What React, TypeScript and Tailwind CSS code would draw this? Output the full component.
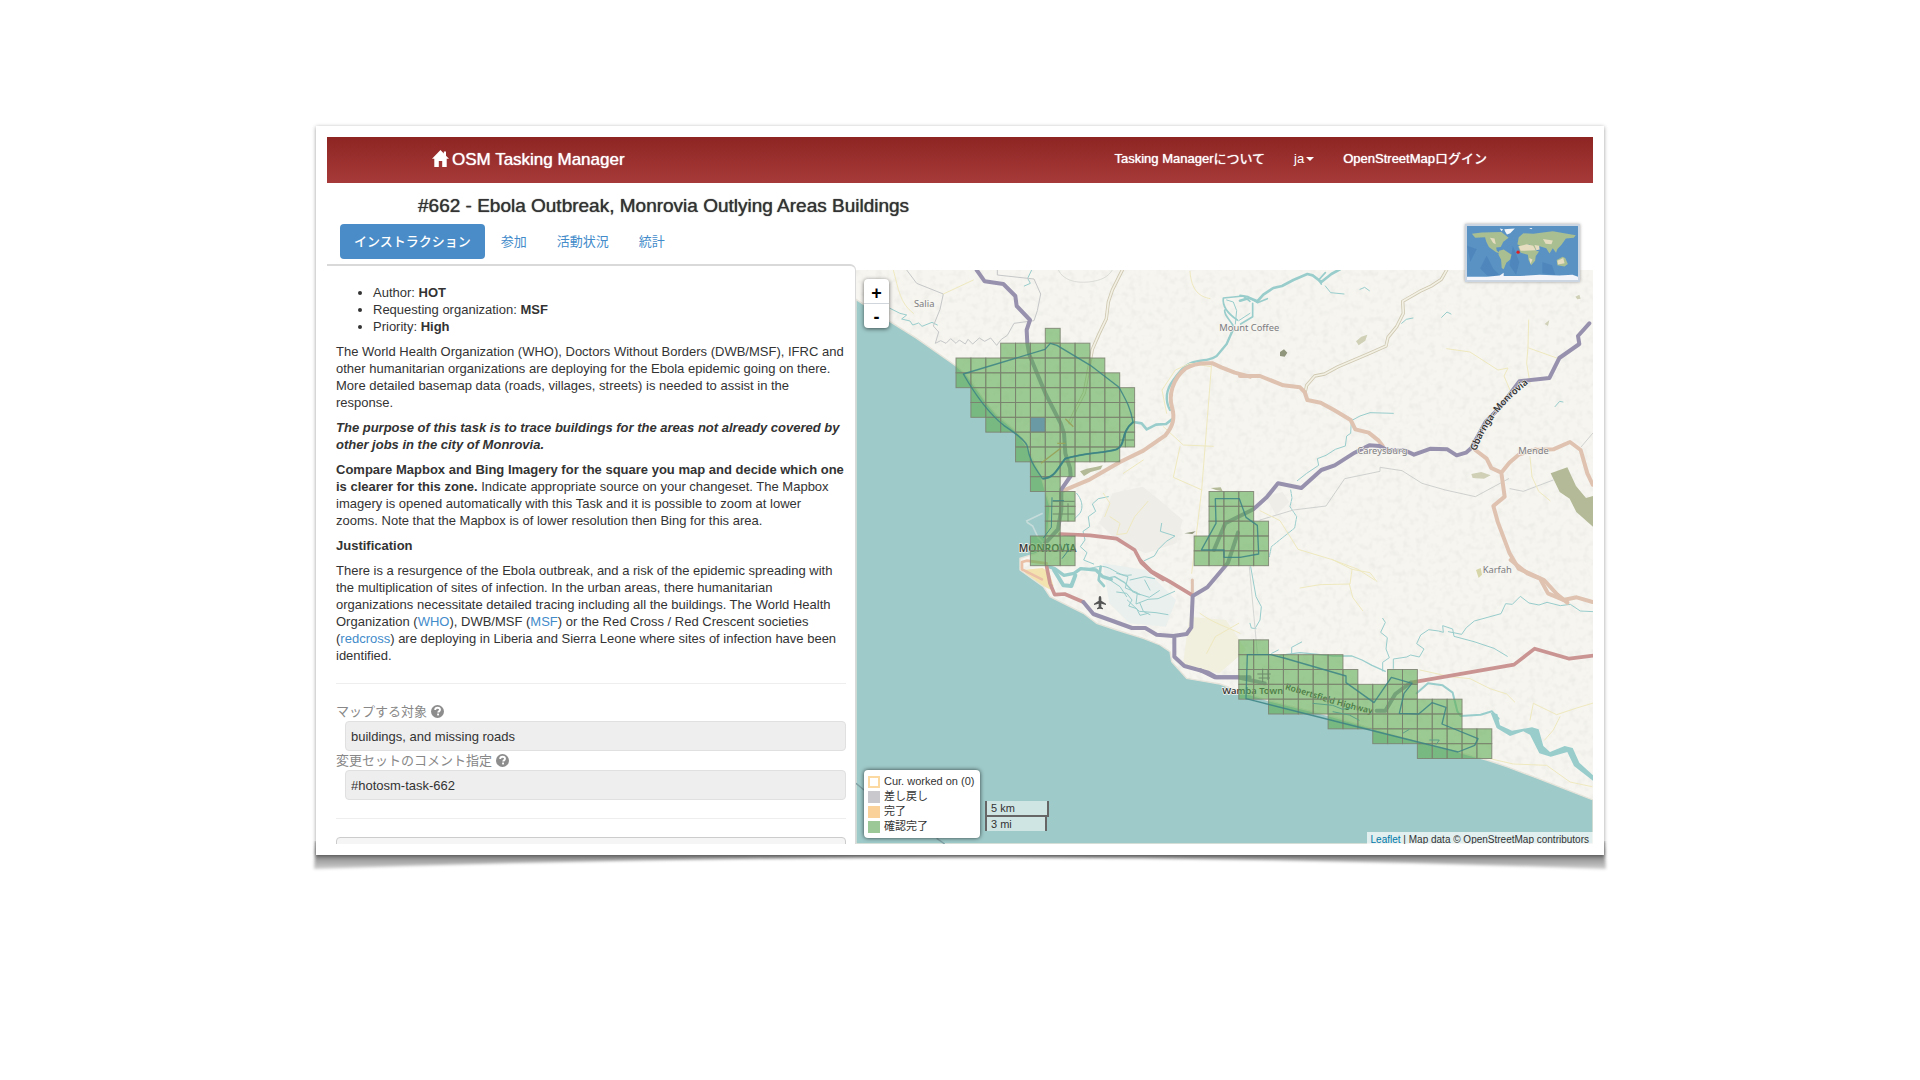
import React from 'react'

type Row = [row: number, from: number, to: number]

const CELL_W = 44.65
const CELL_H = 44.5
const GRID_X = 300
const GRID_Y = 175

const rows: Row[] = [
  [0, 6, 6],
  [1, 3, 8],
  [2, 0, 9],
  [3, 0, 10],
  [4, 1, 11],
  [5, 1, 11],
  [6, 2, 11],
  [7, 4, 11],
  [8, 4, 10],
  [9, 5, 7],
  [10, 5, 6],
  [11, 6, 7],
  [12, 6, 7],
  [13, 6, 6],
  [14, 5, 7],
  [15, 5, 7],
  [11, 17, 19],
  [12, 17, 19],
  [13, 17, 20],
  [14, 16, 20],
  [15, 16, 20],
  [21, 19, 20],
  [22, 19, 25],
  [23, 19, 26],
  [23, 29, 30],
  [24, 19, 30],
  [25, 21, 33],
  [26, 25, 33],
  [27, 28, 35],
  [28, 31, 35],
]

const cells = rows.flatMap(([row, from, to]) =>
  Array.from({ length: to - from + 1 }, (_, i) => ({ row, col: from + i }))
)

const tabs = ['インストラクション', '参加', '活動状況', '統計']

const legend = [
  { label: 'Cur. worked on (0)', swatch: 'border-2 border-[#fbd9a0] bg-white' },
  { label: '差し戻し', swatch: 'bg-[#c9c8cc]' },
  { label: '完了', swatch: 'bg-[#fbd19a]' },
  { label: '確認完了', swatch: 'bg-[#9cc796]' },
]

function HomeIcon() {
  return (
    <svg viewBox="0 0 17 17" className="w-[17px] h-[17px] mb-[3px]" fill="currentColor" aria-hidden="true">
      <path d="M8.5 0 0 8.8h2.3V17h4.5v-6h3.4v6h4.5V8.8H17l-3-3.1V1.4h-2.2v2z" />
    </svg>
  )
}

function HelpIcon() {
  return (
    <svg viewBox="0 0 14 14" className="w-[13px] h-[13px]" aria-hidden="true">
      <circle cx="7" cy="7" r="7" fill="#8d8d8d" />
      <path d="M4.5 5.5C4.5 3.8 5.6 3 7.1 3s2.6.9 2.6 2.2c0 1.7-2 1.6-2 3" fill="none" stroke="#fff" strokeWidth="2" />
      <rect x="6.6" y="9.2" width="2" height="2" fill="#fff" />
    </svg>
  )
}

function Rivers() {
  return (
    <g fill="none" stroke="#98cdcc" strokeWidth="3" strokeLinejoin="round" strokeLinecap="round">
      <g transform="translate(-18 -30)">
        <path d="M120 145l30 15 20 5-15 12 25 6 8 12 18-6 10 10 30-12 16 8" />
        <path d="M545 30l-12 25 8 15-18 8" />
        <path d="M850 486l25 4 15 18 28-14 30-2 18-14" strokeWidth="8" />
        <path d="M960 450c-16-30-12-60 10-90s40-52 70-56 45-6 60-16l30-36 22-50" strokeWidth="7" />
        <path d="M1152 202c-10-22-30-34-28-52M1162 180c-24-16-46-36-42-66l60-6 20 16" strokeWidth="5" />
        <path d="M1130 120l20 6 10 26-4 40M1200 160l-34 22" />
        <path d="M680 700c14 16 22 40 10 60l-16 16" />
        <path d="M775 710l-30 6-18 16 10 22-22 16 4 30-20 14 6 26-14 20 20 18-10 22 30 12" />
        <path d="M935 790l-4 24 44 14-26 16-24 24-12 20-30 14" />
        <path d="M690 925c30 8 50-12 78-4s40 30 76 24" />
      </g>
      <g transform="translate(1152 -30)">
        <path d="M0 122l28-8 24 10 18-20 30-20 26-6 34-18 42-18 16 4 26 20 30-24 26-14" strokeWidth="8" />
        <path d="M0 106l24 4 28 18 30-12M38 130v40l-36 22M244 72l-8-12 20-22" strokeWidth="5" />
        <path d="M256 78l16 20 40 4M360 88l14-6 14 10" />
        <path d="M605 172l16-16 12 6M485 190l14-12 20-4M945 440l14-16 10 2" />
        <path d="M460 460l-70-2-30 10-26 14-2 38-12 8-4 30-30 10-28 18-26 10 4 20-36 24-28 22" />
        <path d="M152 690l4 24-6 26 20 30-6 34-30 24-40 32-6 30" strokeDasharray="9 3" />
      </g>
      <g transform="translate(-18 870)">
        <path d="M590 18l24 8 28 20 30-6 20-14 46 4 20 20 26 8" strokeWidth="10" />
        <path d="M612 30l28 46 24 2 12-32" strokeWidth="12" />
        <path d="M752 20l-6 40 16 18" strokeWidth="8" />
        <path d="M764 56l30-6 30 18 26 28 20 8" strokeWidth="4" />
        <path d="M800 40l34 10-8 34 36 14-4 34 36-14 30-2 50-22M860 100l38 12 30-20M832 120l36 34 50 4 36 6M870 130l10 24 20 10M780 60l30 20 20 30" />
        <path d="M840 60l44-10 30 6M900 90l-16-30M800 96l30 4 16 20-10 18 24 8 10 20 24-6" />
      </g>
      <g transform="translate(1032 870)">
        <path d="M152 20l16 90 16 30-4 40-14 24M150 190l4 14 14 2" />
        <path d="M240 286l60-8 100 10h56l30 12 30 16 40 18" strokeWidth="4" />
        <path d="M548 175l8 12-14 30 20 16-4 34 10 26-20 14v26" />
        <path d="M580 325v-28l40-6 12-6 26 6 14-24-22-16 12-26 24-16 30 4 14 4-2-20 30 10 4 22 60 16 60 20 40 24" />
        <path d="M745 215l40 8 14-20 24-20 80-22 14-30 20 2 24-24 26 20 30 6 24-8 40 10 30-4 30 20 38 2" />
        <path d="M650 400l34-30 44 6 30 22 14 56 10 14 60-4 34-10 20 22" strokeWidth="6" />
        <path d="M275 280v-18l30-16M215 280l20-10" />
      </g>
    </g>
  )
}

function Roads() {
  return (
    <g fill="none" strokeLinejoin="round" strokeLinecap="round">
      <g stroke="#c9ccc9" strokeWidth="3">
        <g transform="translate(-18 -30)">
          <path d="M170 30l30 40 80 32-10 46-20 50 16 18-10 34 16-8 16 8 14-14 16 14 10-10 18 12 8-14 14 14 20-18 16 10 18-10 18 22 14-18 18-12 20-36 60-8 10-30 10-50-20-45-110-12v-25" stroke="#c5c7c8" />
          <path d="M625 30c14 30 50 40 90 36s60-16 72-36" stroke="#dcdcd8" />
        </g>
        <g transform="translate(1152 -30)" stroke="#cfd1cf">
          <path d="M60 780l100-30 98-12 56-82 106-22v-12l66 10 60 38 70 20 90 20 100-54M810 686l40 8 90-34M1024 560l34-40" />
        </g>
        <path d="M1180 890l24 260" stroke="#d5d7d4" />
      </g>
      <g stroke="#efe9bf" strokeWidth="3">
        <g transform="translate(-18 -30)">
          <path d="M130 30c16 60 20 100 60 130M280 102l90-42M1020 34c4 60 30 76 60 82M1085 310l-30 380-30 250M940 500l60 55 90 4M990 560l-20 92 86 38M1082 320l-62-10-44 20-40 60 14 70" />
          <path d="M780 770l30 20-10 34 30-4 24-50 40-46M760 700l20 30-16 40M820 640l60-40" />
        </g>
        <g transform="translate(1152 -30)">
          <path d="M620 266l70 10 84 54 30-6-12 24 18 42M866 180l-2 80-4 50 10 60M866 264l90 32M60 752l60 30 54 86 100 30 80 30 50 32M870 590l6 60 20 44 34 28" />
        </g>
        <g transform="translate(1032 870)">
          <path d="M300 84l60-10 90-2 6-44-60-30M456 28l54 10 20 26M448 72l10 40 30 40M0 160c40 30 80 40 120 60M20 280l26-50 70-40M660 330l90 20 60 6 60 30 50 16 24 24M990 480l10-50 70 34 60-20 60-18M1080 470l-20 40-26 30M870 596l70 16 100 4 70 50 66 14" />
        </g>
      </g>
      <g strokeWidth="10" stroke="#cfc9b2">
        <path d="M817 30l-30 60-12 36-6 50-22 46-20 46-24 130-26 50-18 40" transform="translate(-18 -30)" />
        <path d="M620 30l-16 28-30 20-34 16-52 30 2 36-20 40-26 32-6 26-54 24-90 38-40 22-30 6-24 28-4 18" transform="translate(1152 -30)" />
      </g>
      <g strokeWidth="5" stroke="#f3f0e4">
        <path d="M817 30l-30 60-12 36-6 50-22 46-20 46-24 130-26 50-18 40" transform="translate(-18 -30)" />
        <path d="M620 30l-16 28-30 20-34 16-52 30 2 36-20 40-26 32-6 26-54 24-90 38-40 22-30 6-24 28-4 18" transform="translate(1152 -30)" />
      </g>
      <g stroke="#dfc2b0" strokeWidth="12">
        <path d="M640 692l80-34 90-52 70-34 66-46c22-26 30-50 20-84s0-84 40-116c24-16 52-18 82-16l26 12 40 16 46 12" transform="translate(-18 -30)" />
        <g transform="translate(1152 -30)">
          <path d="M0 348l60 0 70 28 50 6 14 14 8 24 40 8 40 22 50 30 14 28 40 10 30 24 12 16M706 570l34 26 14 28 30 14 24-30 28-24 50-16M784 638l10 72-34 28 14 50 34 90 28 48 76 34 40 44 30 24" />
          <path d="M880 570l60-2 50-22 32 24 20 70 16 34" />
        </g>
        <path d="M932 0l50 40 38 16 24 44 46 20 40-8 48 14" transform="translate(1032 870)" />
        <path d="M1027 60v40" transform="translate(-18 870)" strokeWidth="9" />
        <path d="M590 10l-60-8-14 4 0 22 60 30" transform="translate(-18 870)" strokeWidth="8" stroke="#eac0a6" />
      </g>
      <g stroke="#c99492" strokeWidth="11">
        <path d="M630 822l90 4 80 10 54 34 20 38 30 28 36 22" transform="translate(-18 -30)" />
        <path d="M870 0l34 34 54 30 66 40M590 20l10 50 14 34 30-2 56 24" transform="translate(-18 870)" />
        <path d="M632 368l310-54 62-48 104 30 72-9" transform="translate(1032 870)" />
      </g>
      <g stroke="#9791ae" strokeWidth="12">
        <path d="M380 30l24 34 56 8 36 36 4 30 40 42-10 30 2 40 6 34 50 120 44 86 10 30 4 60 14 44 2 24-28 40 0 60-10 60-50 54" transform="translate(-18 -30)" />
        <path d="M700 126l30 36 50 18 66 24h40l34 20 50 4 40-6 14-20 4-94 44-26 62-74 30-90M973 228v62l30 28 72 20 24 14h100" transform="translate(-18 870)" />
        <path d="M-78 870l34-80 84-42 40-36 34-42 70 14 60-54 40-14 60-38 44-22 30 2 24 12h50l30 14 50-18 50 2 28 18 28-8 16-14 44-80 40-40 60-80 90-10 30-60 60-42-4-24 34-38" transform="translate(1152 -30)" />
        <path d="M0 330l44 22h70l80 18M530 452h26l30-50 46-34" transform="translate(1032 870)" />
      </g>
    </g>
  )
}

function Landscape() {
  return (
    <g>
      <g fill="#eeede8">
        <path d="M770 670l90-20 50 40 70 60-20 70-90 30-80-30-60-60z" />
        <path d="M1000 1040l110 10 60 90-80 70-110-20z" fill="#f1efde" />
        <path d="M740 880l130 20 90 90-30 80-110-10-60-60z" fill="#eaf0ed" />
        <path d="M1230 680l50-14 20 30-40 40z" />
      </g>
      <g fill="#b4ba97">
        <path d="M2084 610l50-18 26 56 30 36 21-6v92l-50-44-20-40-30-20z" />
        <path d="M672 604l20-8 30-6 18-4-6 12-30 8-20 12zM1064 654l30-2 6 12-20-4z" />
        <path d="M1272 246l12-8 10 10-8 12-14-2zM985 790l34-6-10 8z" fill="#8f967b" />
        <path d="M1500 214l16-14 18-6-6 18-20 14zM1846 612l30-6 28 10-20 10-34-2zM2066 162l14-12-4 18zM2158 80l12-6 4 12-10 2z" fill="#cfd0b6" />
        <path d="M1860 900l14-6 4 20-10 10z" fill="#d7d6a9" />
      </g>
      <path d="M500 900l60-6 20 14 12 38-6 14-60-30z" fill="#f3e3ae" />
    </g>
  )
}

function Boundaries() {
  return (
    <g fill="none" stroke="#3b8385" strokeOpacity="0.85" strokeWidth="4" strokeLinejoin="round">
      <path d="M340 342l245-74 16-18 20 6 100 60 86 66c22 40 34 60 42 104-40 32-20 68-50 82-40 12-100 10-154 28-20 24-30 58-68 60-18-30-36-44-46-100-10-20-40-40-70-60-50-40-90-100-121-154z" transform="translate(-18 -30)" />
      <path d="M850 486c-40 32-20 68-50 82-40 12-100 10-154 28-20 24-30 58-68 60" strokeWidth="6" transform="translate(-18 -30)" />
      <path d="M608 722h34M606 712l-2 90-24 32M650 850l6 20-20 26" transform="translate(-18 -30)" strokeWidth="3" />
      <path d="M646 116h72l20 56 34 24 4 86-56 10h-48v-22h-68l44-80z" transform="translate(432 570)" />
      <path d="M82 104l70 0 40 10 186 54v20l84 60 52-76 62 18-24 30-14 60 58 2 40-34 42 14-12 50 108 44-10 20-50 20-240-60-396-100z" transform="translate(1092 1050)" />
    </g>
  )
}

function Hatching() {
  return (
    <g fill="none" stroke="#6d8a6a" strokeWidth="3">
      <path d="M808 488v44M790 510h44M612 666v88M636 700v54M590 694h66M590 732h66" />
      <path d="M1220 1196v40M1236 1200v30M1204 1212h40M1208 1224h34" />
      <path d="M1370 1300l60 6 30 12 30-6M1430 1325l50 10 30 16M1640 1390l20-12M1720 1410h30l-10 14" stroke="#5aa088" />
      <path d="M555 580l60-46M604 520l24 0M652 470l-24-24" stroke="#98a35c" strokeWidth="4" />
    </g>
  )
}

function MapCanvas() {
  return (
    <svg viewBox="0 0 2211 1722" preserveAspectRatio="xMinYMin slice" className="block w-full h-full" role="img" aria-label="Monrovia">
      <defs>
        <filter id="relief" x="0" y="0" width="100%" height="100%">
          <feTurbulence type="fractalNoise" baseFrequency="0.05" numOctaves="2" seed="4" />
          <feColorMatrix values="0 0 0 0 0.6  0 0 0 0 0.6  0 0 0 0 0.56  0.5 0 0 0 -0.23" />
        </filter>
      </defs>
      <rect width="2211" height="1722" fill="#f6f5f0" />
      <rect width="2211" height="1722" filter="url(#relief)" />
      <Landscape />
      <path
        d="M0 88L102 155 182 205 300 288 332 315 392 400 422 435 482 485 512 530 557 625 567 660 582 710 577 770 572 810 542 850 492 865 492 900 562 950 582 980 682 1030 722 1060 782 1080 862 1105 912 1125 942 1145 947 1175 992 1225 1032 1232 1092 1242 1147 1262 1237 1292 1412 1335 1547 1375 1682 1415 1812 1448 1892 1470 1952 1490 2032 1520 2122 1555 2211 1590V1722H0z"
        fill="#9ecac9"
        stroke="#e6e4da"
        strokeWidth="4"
      />
      <path d="M510 754l50-24M512 756l18 12 16 34 20 20" fill="none" stroke="#c5dcda" strokeWidth="5" />
      <path d="M0 1540l24 20M242 1705l24 17" stroke="#7f9fa3" strokeWidth="4" />
      <path
        d="M1904 1328l20 4 8 34 36 16 60-10 20 6 14 50 20 18 44-18 24 6 20 44 41 38v16l-57-44-20-42-50 14-34-10-28-56-20-10-40 14-40-24z"
        fill="#98cdcc"
      />
      <Rivers />
      <Roads />

      <g className="font-['Noto_Sans']" fontSize="28" fill="#7c7c80" stroke="#f6f5f0" strokeWidth="4" paintOrder="stroke">
        <text x="174" y="112">Salia</text>
        <text x="1090" y="184">Mount Coffee</text>
        <text x="1504" y="551">Careysburg</text>
        <text x="1987" y="551">Mende</text>
        <text x="1880" y="908">Karfah</text>
        <g fill="#3a3a3a" fontWeight="600">
          <text x="488" y="846" fontSize="31">MONROVIA</text>
          <text x="1099" y="1271">Wamba Town</text>
        </g>
      </g>
      <g className="font-['Noto_Sans']" fill="#333" fontWeight="600">
        <path id="highway" d="M1286 1258C1370 1280 1440 1310 1560 1334" fill="none" />
        <text fontSize="26"><textPath href="#highway">Robertsfield Highway</textPath></text>
        <path id="gbarnga" d="M1860 544C1888 470 1930 406 2030 330" fill="none" />
        <text fontSize="28" stroke="#f6f5f0" strokeWidth="3" paintOrder="stroke"><textPath href="#gbarnga">Gbarnga–Monrovia</textPath></text>
      </g>
      <path d="M732 978c3 0 4 4 4 8v6l14 9v4l-14-4v10l5 4v3l-9-2-9 2v-3l5-4v-10l-14 4v-4l14-9v-6c0-4 1-8 4-8z" fill="#555" />

      <g stroke="#7b8070" strokeWidth="3" fill="#5fad53" fillOpacity="0.6" strokeOpacity="0.85">
        {cells.map(({ row, col }) => (
          <rect
            key={`${row}-${col}`}
            x={GRID_X + col * CELL_W}
            y={GRID_Y + row * CELL_H}
            width={CELL_W}
            height={CELL_H}
            className={row === 6 && col === 5 ? 'fill-[#6a9aa3] [fill-opacity:1]' : undefined}
          />
        ))}
      </g>
      <Hatching />
      <Boundaries />
    </svg>
  )
}

function WorldMap() {
  return (
    <svg viewBox="0 0 339 165" preserveAspectRatio="none" className="block w-full h-full" role="img" aria-label="World">
      <rect width="339" height="165" fill="#5a92c4" />
      <path d="M60 90l20 40 20 20-30 10-30-30zM140 60l20 50-10 40-20-30zM230 110l30 10 10 30-40-6zM0 60l30 10-20 40z" fill="#4781b8" opacity="0.6" />
      <g fill="#a9bf92">
        <path d="M15 24l30-4 60-2 22 18-16 12-8 16-14 2 2 10 12 8-14-4-22-16-8-16-4-14-30 2z" />
        <path d="M98 76l14-4 24 16-4 14-12 10-8 20-6-4-2-26-8-14z" />
        <path d="M154 56l4-22 14-12 30 2 60-8 70 12-6 8-24 2-14 20-12 12-4 12-10-14-10 16-10-16-20-6-12 8-20-14-12 4-14 2z" />
        <path d="M156 62l26-6 20 2 10 18 8 2-10 14-2 14-12 14-8-16-2-16-22-6z" />
        <path d="M274 104l18-10 8 4 8 18-10 8-22-4z" />
      </g>
      <g fill="#e6dcc0">
        <path d="M158 62l24-6 20 4 8 14-46 2zM206 58l14 2 2 12-10 2zM276 106l18-8 4 16-20 4zM70 36l14 2 4 18-8-4zM232 40l30 4-4 12-18-2zM190 98l10 4-6 14z" />
      </g>
      <path d="M114 10l32-2-14 14-10 4-6-10zM100 8l10 2-4 6zM190 6l10 0-4 4z" fill="#f3f6f8" />
      <path d="M0 155l60 0 40-4 12-8 0 10 50 0 60-4 60 2 40-2 17 6v10H0z" fill="#f3f5fa" />
      <circle cx="156" cy="80" r="5" fill="#e02020" />
    </svg>
  )
}

function TaskMap() {
  return (
    <section className="relative flex-1 min-w-0 mt-[6px]">
      <div className="h-full overflow-hidden">
        <MapCanvas />
      </div>

      <div className="absolute left-2 top-[9px] w-[25px] flex flex-col rounded bg-white text-black text-lg font-bold leading-none shadow-[0_1px_4px_rgba(0,0,0,0.6)]">
        <button aria-label="Zoom in" className="h-[25px] pt-[3px] border-b border-gray-300">+</button>
        <button aria-label="Zoom out" className="h-6 pt-[2px]">-</button>
      </div>

      <div className="absolute right-[13px] top-[-46px] w-[115px] h-[58px] border-2 border-[#ccd6e2] shadow-[0_0_3px_rgba(0,0,0,0.35)]">
        <WorldMap />
      </div>

      <div className="absolute left-2 bottom-[6px] flex items-end gap-[5px]">
        <ul className="w-[116px] rounded bg-white px-1 py-1 text-[11px] text-[#333] shadow-[0_0_4px_rgba(0,0,0,0.7)]">
          {legend.map(({ label, swatch }) => (
            <li key={label} className="flex items-center gap-1 h-[15px] whitespace-nowrap">
              <span className={`w-3 h-3 shrink-0 ${swatch}`} />
              {label}
            </li>
          ))}
        </ul>
        <div className="mb-[7px] text-[11px] leading-[14px] text-[#333]">
          <div className="w-16 border-2 border-t-0 border-[#666] bg-white/50 px-1">5 km</div>
          <div className="w-[62px] border-x-2 border-[#666] bg-white/50 px-1">3 mi</div>
        </div>
      </div>

      <div className="absolute right-0 bottom-0 h-3 overflow-hidden bg-white/70 px-1 text-[10px] leading-4 text-[#333] whitespace-nowrap">
        <a href="#leaflet" className="text-[#0078a8]">Leaflet</a> | Map data © OpenStreetMap contributors
      </div>
    </section>
  )
}

function Field({ id, label, value }: { id: string; label: string; value: string }) {
  return (
    <div>
      <label htmlFor={id} className="flex items-center gap-1 h-[19px] text-[13px] text-[#888]">
        {label} <HelpIcon />
      </label>
      <input
        id={id}
        readOnly
        defaultValue={value}
        className="block ml-[9px] w-[501px] h-[30px] rounded border border-[#e0e0e0] bg-[#eee] px-[5px] text-[13px] text-[#333]"
      />
    </div>
  )
}

function Instructions() {
  return (
    <section className="w-[529px] shrink-0 overflow-hidden rounded-tr-md border-t-2 border-r border-[#d9d9d9] bg-white px-[9px] pt-[18px] text-[13px] leading-[17px] text-[#333]">
      <ul className="list-disc pl-[37px] mb-2">
        <li>Author: <strong>HOT</strong></li>
        <li>Requesting organization: <strong>MSF</strong></li>
        <li>Priority: <strong>High</strong></li>
      </ul>
      <p className="mb-2">
        The World Health Organization (WHO), Doctors Without Borders (DWB/MSF), IFRC and other humanitarian
        organizations are deploying for the Ebola epidemic going on there. More detailed basemap data (roads,
        villages, streets) is needed to assist in the response.
      </p>
      <p className="mb-2 font-bold italic">
        The purpose of this task is to trace buildings for the areas not already covered by other jobs in the
        city of Monrovia.
      </p>
      <p className="mb-2">
        <strong>Compare Mapbox and Bing Imagery for the square you map and decide which one is clearer for this zone.</strong>{' '}
        Indicate appropriate source on your changeset. The Mapbox imagery is opened automatically with this Task
        and it is possible to zoom at lower zooms. Note that the Mapbox is of lower resolution then Bing for this area.
      </p>
      <p className="mb-2 font-bold">Justification</p>
      <p>
        There is a resurgence of the Ebola outbreak, and a risk of the epidemic spreading with the multiplication
        of sites of infection. In the urban areas, there humanitarian organizations necessitate detailed tracing
        including all the buildings. The World Health Organization (<a href="#who" className="text-[#428bca]">WHO</a>),
        DWB/MSF (<a href="#msf" className="text-[#428bca]">MSF</a>) or the Red Cross / Red Crescent societies
        (<a href="#redcross" className="text-[#428bca]">redcross</a>) are deploying in Liberia and Sierra Leone
        where sites of infection have been identified.
      </p>
      <hr className="mt-[19px] mb-[18px] border-[#eee]" />
      <Field id="entities" label="マップする対象" value="buildings, and missing roads" />
      <Field id="comment" label="変更セットのコメント指定" value="#hotosm-task-662" />
      <hr className="my-[18px] border-[#eee]" />
      <div className="h-9 rounded border border-[#ccc] bg-[#f5f5f5]" />
    </section>
  )
}

export default function App() {
  return (
    <div className="min-h-screen bg-white pt-[126px] px-4 font-['Liberation_Sans','Noto_Sans_CJK_JP',sans-serif]">
      <div className="relative mx-auto w-full max-w-[1288px]">
        <svg viewBox="0 0 1300 40" preserveAspectRatio="none" className="absolute left-[-6px] bottom-[-26px] w-[1300px] h-10" aria-hidden="true">
          <defs>
            <linearGradient id="curl" x1="0" y1="0" x2="0" y2="1">
              <stop offset="0.35" stopColor="#6f6f6f" />
              <stop offset="1" stopColor="#cfcfcf" />
            </linearGradient>
            <filter id="soften" x="-2%" y="-50%" width="104%" height="200%">
              <feGaussianBlur stdDeviation="1.5" />
            </filter>
          </defs>
          <path d="M6 0H1294L1296 28Q650 5 4 28z" fill="url(#curl)" filter="url(#soften)" />
        </svg>

        <div className="relative bg-white p-[11px] shadow-[0_1px_4px_rgba(0,0,0,0.4)]">
          <nav className="flex h-[46px] items-center justify-between bg-linear-to-b from-[#8e2523] to-[#a63a3a] pl-[105px] pr-[106px] text-white">
            <a href="#home" className="flex items-center gap-[3px] text-[17px] [text-shadow:0_0_1px_#fff]">
              <HomeIcon /> OSM Tasking Manager
            </a>
            <div className="flex items-center gap-[29px] pb-[2px] text-[13px] [text-shadow:0_0_1px_#fff]">
              <a href="#about">Tasking Managerについて</a>
              <button className="flex items-center gap-[2px]">
                ja <span className="border-x-4 border-t-4 border-x-transparent border-t-white" />
              </button>
              <a href="#login">OpenStreetMapログイン</a>
            </div>
          </nav>

          <h1 className="h-[41px] pl-[91px] text-[19px] leading-[45px] text-[#333] [text-shadow:0_0_1px_#333]">
            #662 - Ebola Outbreak, Monrovia Outlying Areas Buildings
          </h1>

          <div className="flex gap-[2px] pl-[13px] mb-[5px]" role="tablist">
            {tabs.map((tab, i) => (
              <button
                key={tab}
                role="tab"
                aria-selected={i === 0}
                className={`h-[35px] rounded px-[14px] text-[13px] ${
                  i === 0 ? 'bg-[#4a8cc7] text-white font-medium' : 'text-[#428bca]'
                }`}
              >
                {tab}
              </button>
            ))}
          </div>

          <main className="flex h-[580px]">
            <Instructions />
            <TaskMap />
          </main>
        </div>
      </div>
    </div>
  )
}
